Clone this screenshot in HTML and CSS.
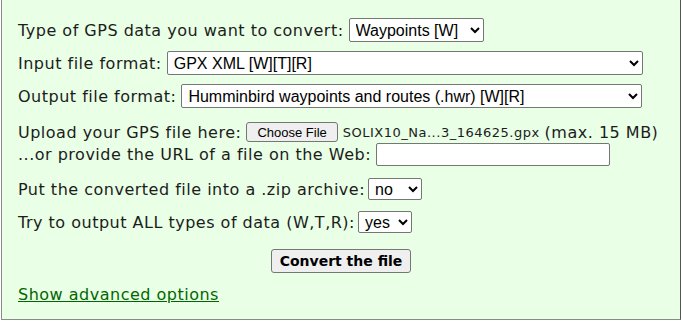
FILE: index.html
```html
<!DOCTYPE html>
<html>
<head>
   <title>GPS Visualizer: Convert GPS files</title>
   <link rel="stylesheet" href="styles.css">
</head>
<body>
   <form class="convert-box" id="convertForm">
       <div class="row row-type">
           <label for="convertType">Type of GPS data you want to convert:</label>
           <select id="convertType" class="sel sel-type">
               <option>Waypoints [W]</option>
               <option>Tracks [T]</option>
               <option>Routes [R]</option>
           </select>
       </div>
       <div class="row">
           <label for="inFormat">Input file format:</label>
           <select id="inFormat" class="sel sel-in">
               <option>GPX XML [W][T][R]</option>
           </select>
       </div>
       <div class="row">
           <label for="outFormat">Output file format:</label>
           <select id="outFormat" class="sel sel-out">
               <option>Humminbird waypoints and routes (.hwr) [W][R]</option>
           </select>
       </div>
       <div class="upload">
           <div class="line line-file">
               <span>Upload your GPS file here:</span>
               <button type="button" class="file-btn">Choose File</button>
               <span class="file-name">SOLIX10_Na...3_164625.gpx</span>
               <span>(max. 15 MB)</span>
           </div>
           <div class="line line-url">
               <label for="remoteUrl">...or provide the URL of a file on the Web:</label>
               <input type="text" id="remoteUrl" class="url-input">
           </div>
       </div>
       <div class="row row-zip">
           <label for="zip">Put the converted file into a .zip archive:</label>
           <select id="zip" class="sel sel-small">
               <option>no</option>
               <option>yes</option>
           </select>
       </div>
       <div class="row row-all">
           <label for="allTypes">Try to output ALL types of data (W,T,R):</label>
           <select id="allTypes" class="sel sel-small">
               <option>yes</option>
               <option>no</option>
           </select>
       </div>
       <div class="submit-row">
           <button type="submit" class="submit-btn">Convert the file</button>
       </div>
       <div class="advanced">
           <a href="#" class="advanced-link">Show advanced options</a>
       </div>
   </form>
</body>
</html>
```

FILE: styles.css
```css
body {
    margin: 0;
    background-color: #ffffff;
    font-family: "DejaVu Sans", Verdana, sans-serif;
    font-size: 16px;
    letter-spacing: 0.5px;
    color: #1c1c1c;
}
.convert-box {
    display: flex;
    flex-direction: column;
    margin: -1px 1px 0 1px;
    padding: 18px 16px 14px 16px;
    border: 1px solid #8a8a8a;
    border-right-color: #555;
    background-color: #e9ffe6;
}
.row {
    display: flex;
    align-items: center;
    gap: 5px;
    height: 24px;
    margin-bottom: 9px;
    white-space: nowrap;
}
.sel {
    height: 24px;
    font-family: "Liberation Sans", Arial, sans-serif;
    font-size: 16px;
    letter-spacing: 0;
    color: #000;
    background-color: #fff;
    border: 1px solid #767676;
    border-radius: 2px;
    padding: 0 2px;
}
.sel-type {
    width: 135px;
}
.sel-in {
    width: 476px;
}
.sel-out {
    width: 461px;
}
.sel-small {
    width: 54px;
    height: 22px;
}
.row-zip .sel-small,
.row-all .sel-small {
    margin-left: -2px;
}
.upload {
    margin-top: 4px;
    margin-bottom: 12px;
    white-space: nowrap;
}
.line {
    display: flex;
    align-items: center;
    gap: 5px;
}
.line-file {
    height: 22px;
}
.line-url {
    height: 23px;
}
.file-btn {
    height: 20px;
    padding: 0 10px;
    font-family: "Liberation Sans", Arial, sans-serif;
    font-size: 13px;
    letter-spacing: 0;
    color: #000;
    background-color: #efefef;
    border: 1px solid #767676;
    border-radius: 3px;
}
.file-name {
    font-size: 13px;
    margin-left: 0;
}
.url-input {
    width: 234px;
    height: 23px;
    box-sizing: border-box;
    border: 1px solid #767676;
    border-radius: 2px;
    background-color: #fff;
}
.row-zip {
    height: 22px;
    margin-bottom: 11px;
}
.row-all {
    height: 22px;
    margin-bottom: 16px;
}
.submit-row {
    display: flex;
    justify-content: center;
    margin-bottom: 12px;
}
.submit-btn {
    height: 24px;
    padding: 0 8px;
    font-family: "DejaVu Sans", Verdana, sans-serif;
    font-size: 14px;
    font-weight: bold;
    letter-spacing: 0;
    color: #000;
    background-color: #efefef;
    border: 1px solid #767676;
    border-radius: 3px;
}
.advanced {
    height: 20px;
    line-height: 20px;
}
.advanced-link {
    color: #006600;
}
```
